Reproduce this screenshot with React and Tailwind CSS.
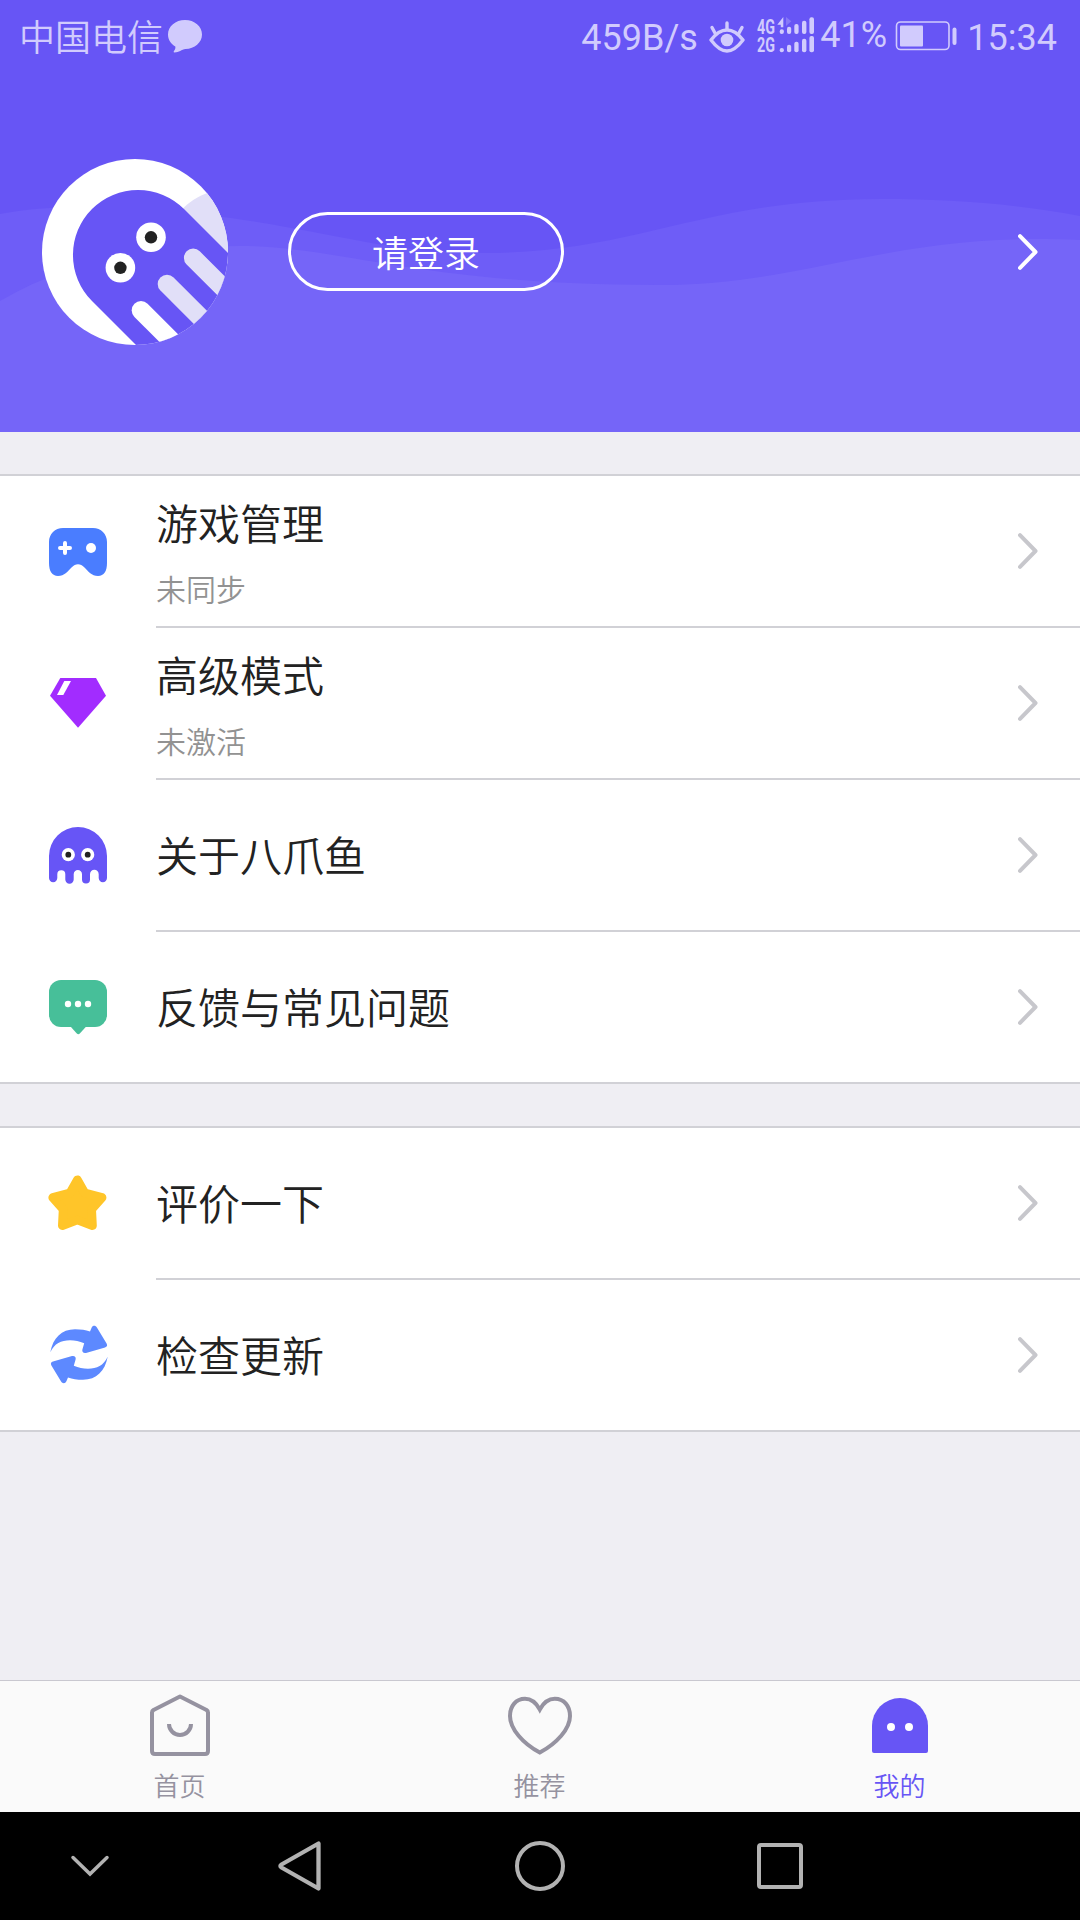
import React from "react";
import clsx from "clsx";

function Chevron({ className }) {
  return (
    <svg className={clsx("h-9 w-5 shrink-0", className)} viewBox="0 0 20 36" fill="none" stroke="currentColor" strokeWidth="4" strokeLinecap="round" strokeLinejoin="round">
      <path d="M2 2.200L17.500 18L2 33.800" />
    </svg>
  );
}

function GamepadIcon() {
  return (
    <svg className="h-[60px] w-[60px]" viewBox="0 0 60 60">
      <path fill="#4a7dff" d="M15 7H45C53 7 59 13 59 21V42C59 50 56 55 50 55C43.500 55 40.500 50.500 36.500 46.500C34 44 32.500 43.200 30 43.200C27.500 43.200 26 44 23.500 46.500C19.500 50.500 16.500 55 10 55C4 55 1 50 1 42V21C1 13 7 7 15 7Z" />
      <path d="M12 27H22M17 22V32" stroke="#fff" strokeWidth="4" strokeLinecap="round" />
      <circle cx="43" cy="27" r="5" fill="#fff" />
    </svg>
  );
}

function DiamondIcon() {
  return (
    <svg className="h-[60px] w-[60px]" viewBox="0 0 60 60">
      <path fill="#a22cff" d="M12.300 5H48L58 22.700L30 54.800L2 22.700Z" />
      <path fill="#fff" d="M16.300 8H23L15.300 22H9Z" />
    </svg>
  );
}

function OctopusIcon() {
  return (
    <svg className="h-[60px] w-[60px]" viewBox="0 0 60 60">
      <path
        fill="#6755f6"
        d="M1 31A29 29 0 0 1 59 31V53A4.150 4.150 0 0 1 50.700 53V49.200A4.350 4.350 0 0 0 42 49.200V54.600A4 4 0 0 1 34 54.600V49.200A4.150 4.150 0 0 0 25.700 49.200V54.600A4.200 4.200 0 0 1 17.300 54.600V49.200A4 4 0 0 0 9.300 49.200V53A4.150 4.150 0 0 1 1 53Z"
      />
      <circle cx="20.300" cy="29.700" r="6.600" fill="#fff" />
      <circle cx="39.700" cy="29.700" r="6.600" fill="#fff" />
      <circle cx="20.300" cy="29.700" r="2.900" fill="#222" />
      <circle cx="39.700" cy="29.700" r="2.900" fill="#222" />
    </svg>
  );
}

function FeedbackIcon() {
  return (
    <svg className="h-[60px] w-[60px]" viewBox="0 0 60 60">
      <rect x="1" y="3" width="58" height="47" rx="12" fill="#47bf99" />
      <path fill="#47bf99" d="M22.500 49.500L28.800 56.500Q30.300 58 31.800 56.500L38.200 49.500Z" />
      <circle cx="20" cy="27" r="3.200" fill="#fff" />
      <circle cx="30" cy="27" r="3.200" fill="#fff" />
      <circle cx="40" cy="27" r="3.200" fill="#fff" />
    </svg>
  );
}

function StarIcon() {
  return (
    <svg className="h-[60px] w-[60px]" viewBox="0 0 60 60">
      <path
        fill="#ffc529"
        stroke="#ffc529"
        strokeWidth="8.800"
        strokeLinejoin="round"
        d="M29.400 6.800L21.900 20.100L4.800 24.600L15.200 36.400L14.400 52.600L29.400 47L44.400 52.600L43.600 36.400L54 24.600L36.900 20.100Z"
      />
    </svg>
  );
}

function UpdateIcon() {
  const arrow =
    "M2.300 27.300C5 13 13.500 4.300 27 4.300C33 4.300 37.500 5 42 6.600L43.600 2.700C44.600 .3 47.500 .1 48.900 2.400L58.600 18.600C59.700 20.600 59 22 57 22.500L38 27.900C35.500 28.500 33.700 26.900 34.400 24.600L36.200 18.300C31.500 16.300 27 15.300 22 15.300C13 15.300 6.500 18.500 2.300 27.300Z";
  return (
    <svg className="h-[60px] w-[60px] overflow-visible" viewBox="0 0 60 60" fill="#5d89ff">
      <path d={arrow} />
      <path d={arrow} transform="rotate(180 31 29.500)" />
    </svg>
  );
}

function Avatar() {
  return (
    <svg className="h-[186px] w-[186px] shrink-0" viewBox="0 0 186 186">
      <defs>
        <clipPath id="avatar">
          <circle cx="93" cy="93" r="93" />
        </clipPath>
      </defs>
      <g clipPath="url(#avatar)">
        <rect width="186" height="186" fill="#fff" />
        <path fill="#e1dff8" d="M140 50.500C147 43 155 37.500 167 33.500H190V110Z" />
        <path fill="#6755f5" d="M142 50L242 150V242H150L50 142A65 65 0 0 1 142 50Z" />
        <g strokeWidth="18.600" strokeLinecap="round">
          <path d="M99 151.300L150 202.300" stroke="#fff" />
          <path d="M125 125L180 180" stroke="#e1dff8" />
          <path d="M151.200 98.900L200 147.700" stroke="#e1dff8" />
        </g>
        <circle cx="109" cy="78.300" r="14.800" fill="#fff" />
        <circle cx="78.400" cy="108.800" r="14.800" fill="#fff" />
        <circle cx="109" cy="78.300" r="6.200" fill="#222" />
        <circle cx="78.400" cy="108.800" r="6.200" fill="#222" />
      </g>
    </svg>
  );
}

function StatusBar() {
  return (
    <div className="relative flex h-[72px] items-center pl-[19px] pr-[23px] text-4xl leading-none text-[#d1cbfd]">
      <span className="pb-[3px]">中国电信</span>
      <svg className="ml-[5px] mt-0.5 h-[34px] w-[34px]" viewBox="0 0 34 34" fill="currentColor">
        <path d="M17 0C26.500 0 34 6.300 34 14.500C34 22.500 26.500 29 17.500 29C13.500 29.500 11 32.500 6.500 32.500C5.300 32.500 5.500 31.500 6.300 30.500C7.300 29.300 7.600 28 7.300 26.500C3 24 0 19.800 0 14.500C0 6.300 7.500 0 17 0Z" />
      </svg>

      <div className="ml-auto flex items-center font-[Roboto] font-normal">
        <span className="w-[116px] pt-[3px]">459B/s</span>
        <svg className="ml-3 mt-0.5 h-8 w-9" viewBox="0 0 36 32" fill="none" stroke="currentColor" strokeWidth="3.400" strokeLinecap="round">
          <path d="M2 19C8 11 13 9 18 9C23 9 28 11 34 19C28 27 23 30 18 30C13 30 8 27 2 19Z" strokeLinejoin="round" />
          <circle cx="18" cy="19" r="6.300" fill="currentColor" stroke="none" />
          <path d="M18 8V2M6 12L3 6.500M30 12L33 6.500" />
        </svg>
        <svg className="-mt-0.5 ml-3 h-9 w-[58px] overflow-visible" viewBox="0 0 58 36" fill="currentColor">
          <g fontFamily="Roboto" fontWeight="700" fontSize="20.500">
            <text x="0" y="16.800" textLength="18" lengthAdjust="spacingAndGlyphs">4G</text>
            <text x="0" y="35" textLength="18" lengthAdjust="spacingAndGlyphs">2G</text>
          </g>
          <path d="M20.300 7.700L26.300 0V10.300H23.800V7.700Z" />
          <path d="M29 0L34.300 4.300L29 9Z" opacity=".3" />
          <rect x="22.700" y="12.300" width="4.200" height="4.700" rx="2" />
          <rect x="30" y="9.700" width="4.200" height="7.300" rx="2" />
          <rect x="37.300" y="7" width="4.300" height="10" rx="2" />
          <rect x="45" y="3.700" width="4.400" height="13.300" rx="2" />
          <rect x="52.400" y=".3" width="4.600" height="16.700" rx="2" />
          <rect x="22.700" y="31" width="4.200" height="4.300" rx="2" />
          <rect x="30" y="27.700" width="4.200" height="7.600" rx="2" />
          <rect x="37.300" y="24.700" width="4.300" height="10.600" rx="2" />
          <rect x="45" y="21.700" width="4.400" height="13.600" rx="2" />
          <rect x="52.400" y="19" width="4.600" height="16.300" rx="2" />
        </svg>
        <span className="ml-[5px] w-[67px] pb-[3px]">41%</span>
        <svg className="ml-2 h-[30px] w-[63px]" viewBox="0 0 63 30">
          <rect x="1.500" y="1" width="52.500" height="27.500" rx="4" fill="none" stroke="currentColor" strokeWidth="1.600" />
          <rect x="5" y="4.500" width="23" height="21" rx="1" fill="currentColor" />
          <rect x="57.500" y="6.500" width="4" height="17.500" rx="2" fill="currentColor" />
        </svg>
        <span className="ml-[9px] pt-[3px]">15:34</span>
      </div>
    </div>
  );
}

function Header() {
  return (
    <header className="relative h-[432px] bg-[#6755f5]">
      {/* Background waves */}
      <svg className="absolute inset-0 h-full w-full" viewBox="0 0 1080 432" preserveAspectRatio="none">
        <path fill="#6e5df7" d="M0 214C50 204 130 204 231 218C340 234 390 253 482 253C640 253 700 199 881 199C950 199 1010 203 1080 216V432H0Z" />
        <path fill="#7565f8" d="M0 301C70 260 150 246 240 246C340 246 420 285 658 285C800 285 880 239 1035 239C1050 239 1065 239 1080 240V432H0Z" />
      </svg>
      <StatusBar />
      <div className="relative flex h-[360px] items-center pl-[42px] pr-[42px]">
        <Avatar />
        <button className="mb-px ml-[60px] flex h-[79px] w-[276px] items-center justify-center rounded-full border-3 border-white pb-0.5 text-4xl text-white">
          请登录
        </button>
        <Chevron className="ml-auto text-white" />
      </div>
    </header>
  );
}

function MenuRow({ icon, title, subtitle, last }) {
  return (
    <div className="flex h-[152px]">
      <div className="flex w-[156px] items-center justify-center pb-0.5">{icon}</div>
      <div className={clsx("flex flex-1 items-center justify-between pr-[42px]", last ? "pb-0.5" : "border-b-2 border-[#d1d1d6]")}>
        <div className={clsx("flex flex-col gap-[23px]", !subtitle && "pb-0.5")}>
          <span className="text-[42px] leading-[50px] text-[#222]">{title}</span>
          {subtitle && <span className="text-3xl leading-9 text-[#929292]">{subtitle}</span>}
        </div>
        <Chevron className="text-[#c7c7cc]" />
      </div>
    </div>
  );
}

function MenuGroup({ items }) {
  return (
    <section className="-mb-0.5 border-y-2 border-[#d1d1d6] bg-white">
      <div className="-mb-0.5">
        {items.map((item, i) => (
          <MenuRow key={item.title} {...item} last={i === items.length - 1} />
        ))}
      </div>
    </section>
  );
}

function TabBar() {
  const tabs = [
    {
      label: "首页",
      icon: (
        <svg className="h-16 w-16" viewBox="0 0 64 64" fill="none" stroke="currentColor" strokeWidth="4">
          <path strokeLinejoin="round" d="M32 3.500L58.500 17Q60 18 60 19.500V58Q60 61 57 61H7Q4 61 4 58V19.500Q4 18 5.500 17Z" />
          <path d="M21 31A11 11 0 0 0 43 31" />
        </svg>
      ),
    },
    {
      label: "推荐",
      icon: (
        <svg className="h-16 w-16" viewBox="0 0 64 64" fill="none" stroke="currentColor" strokeWidth="4">
          <path d="M31.800 16.500C28 9.500 23 5.800 17 5.800C8 5.800 2 13 2 23C2 36 15 50.500 31.800 59.600C48.600 50.500 62 36 62 23C62 13 56 5.800 46.800 5.800C41 5.800 35.600 9.500 31.800 16.500Z" />
        </svg>
      ),
    },
    {
      label: "我的",
      active: true,
      icon: (
        <svg className="h-16 w-16" viewBox="0 0 64 64">
          <path fill="currentColor" d="M4 33A28 28 0 0 1 60 33V58Q60 60 58 60H6Q4 60 4 58Z" />
          <circle cx="23" cy="34" r="4" fill="#fff" />
          <circle cx="41" cy="34" r="4" fill="#fff" />
        </svg>
      ),
    },
  ];

  return (
    <nav className="flex h-[132px] border-t border-[#c9c8d0] bg-[#fafafa]">
      {tabs.map((tab) => (
        <div key={tab.label} className={clsx("flex flex-1 flex-col items-center pt-3", tab.active ? "text-[#6755f5]" : "text-[#9592a0]")}>
          {tab.icon}
          <span className="mt-2.5 pr-px text-[26px] leading-9">{tab.label}</span>
        </div>
      ))}
    </nav>
  );
}

function SystemNav() {
  return (
    <div className="flex h-[108px] items-center bg-black text-[#b2b2b2]">
      <div className="flex w-[180px] justify-center">
        <svg className="h-6 w-10" viewBox="0 0 40 24" fill="none" stroke="currentColor" strokeWidth="3.500" strokeLinecap="round">
          <path d="M3 3.500L20 20L37 3.500" />
        </svg>
      </div>
      <div className="flex w-[240px] justify-center">
        <svg className="h-[52px] w-[52px]" viewBox="0 0 52 52" fill="none" stroke="currentColor" strokeWidth="4.300" strokeLinejoin="round">
          <path d="M44.500 3.500V48.500L7.500 27.500Q5.300 26 7.500 24.500Z" />
        </svg>
      </div>
      <div className="flex w-[240px] justify-center">
        <div className="h-[50px] w-[50px] rounded-full border-[4.500px] border-current" />
      </div>
      <div className="flex w-[240px] justify-center">
        <div className="h-[46px] w-[46px] rounded border-[4.500px] border-current" />
      </div>
    </div>
  );
}

export default function App() {
  const mainItems = [
    { title: "游戏管理", subtitle: "未同步", icon: <GamepadIcon /> },
    { title: "高级模式", subtitle: "未激活", icon: <DiamondIcon /> },
    { title: "关于八爪鱼", icon: <OctopusIcon /> },
    { title: "反馈与常见问题", icon: <FeedbackIcon /> },
  ];

  const otherItems = [
    { title: "评价一下", icon: <StarIcon /> },
    { title: "检查更新", icon: <UpdateIcon /> },
  ];

  return (
    <div className="flex h-[1920px] w-[1080px] flex-col overflow-hidden bg-[#efeef3] font-['Noto_Sans_CJK_SC',sans-serif] font-[350]">
      <Header />
      <main className="flex flex-1 flex-col gap-11 pt-[42px]">
        <MenuGroup items={mainItems} />
        <MenuGroup items={otherItems} />
      </main>
      <TabBar />
      <SystemNav />
    </div>
  );
}
